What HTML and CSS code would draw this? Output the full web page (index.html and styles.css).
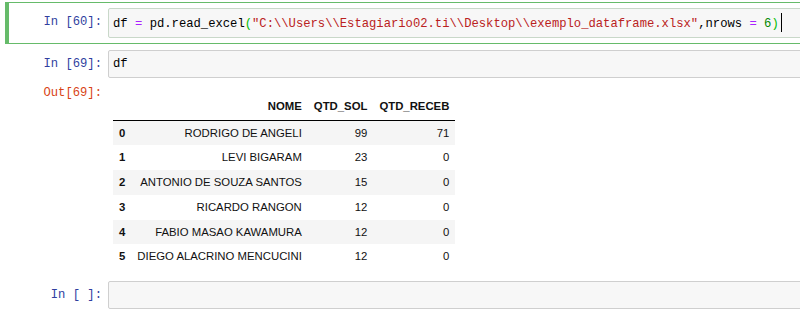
FILE: index.html
```html
<!DOCTYPE html>
<html lang="en">
<head>
    <meta charset="UTF-8">
    <title>Notebook</title>
    <link rel="stylesheet" href="styles.css">
</head>
<body>
    <div class="notebook">
        <!-- selected cell, edit mode -->
        <div class="cell selected">
            <div class="prompt in">In&nbsp;[60]:</div>
            <div class="input-area">
                <pre class="code"><span>df</span> <span class="op">=</span> <span>pd.read_excel</span><span class="match">(</span><span class="str">"C:\\Users\\Estagiario02.ti\\Desktop\\exemplo_dataframe.xlsx"</span>,<span>nrows</span> <span class="op">=</span> <span class="num">6</span><span class="match">)</span><span class="cursor"></span></pre>
            </div>
        </div>

        <div class="cell">
            <div class="cell-input">
                <div class="prompt in">In&nbsp;[69]:</div>
                <div class="input-area">
                    <pre class="code">df</pre>
                </div>
            </div>
            <div class="output">
                <div class="prompt out">Out[69]:</div>
                <div class="output-sub">
                    <table class="dataframe">
                        <thead>
                            <tr>
                                <th></th>
                                <th>NOME</th>
                                <th>QTD_SOL</th>
                                <th>QTD_RECEB</th>
                            </tr>
                        </thead>
                        <tbody>
                            <tr><th>0</th><td>RODRIGO DE ANGELI</td><td>99</td><td>71</td></tr>
                            <tr><th>1</th><td>LEVI BIGARAM</td><td>23</td><td>0</td></tr>
                            <tr><th>2</th><td>ANTONIO DE SOUZA SANTOS</td><td>15</td><td>0</td></tr>
                            <tr><th>3</th><td>RICARDO RANGON</td><td>12</td><td>0</td></tr>
                            <tr><th>4</th><td>FABIO MASAO KAWAMURA</td><td>12</td><td>0</td></tr>
                            <tr><th>5</th><td>DIEGO ALACRINO MENCUCINI</td><td>12</td><td>0</td></tr>
                        </tbody>
                    </table>
                </div>
            </div>
        </div>

        <div class="cell">
            <div class="prompt in">In&nbsp;[&nbsp;]:</div>
            <div class="input-area">
                <pre class="code"> </pre>
            </div>
        </div>
    </div>
</body>
</html>
```

FILE: styles.css
```css
html,
body {
    width: 800px;
    overflow: hidden;
}

body {
    margin: 0;
    background-color: #fff;
    font-family: 'Liberation Sans', Arial, sans-serif;
}

/* the notebook is wider than the window, cells run off the right edge */
.notebook {
    width: 795px;
    padding: 2px 0 0 5px;
    overflow: hidden;
}

.cell {
    display: flex;
    width: 810px;
    border: 1px solid transparent;
    border-left-width: 4px;
    padding: 5px;
}

.cell:has(.cell-input) {
    flex-direction: column;
}

.cell.selected {
    border-color: #66bb6a;
}

.cell-input,
.output {
    display: flex;
}

.prompt {
    flex: 0 0 94px;
    box-sizing: border-box;
    padding-right: 6px;
    text-align: right;
    font-family: 'Liberation Mono', monospace;
    font-size: 12.2px;
    line-height: 18px;
    white-space: nowrap;
}

.prompt.in {
    padding-top: 5px;
    color: #303f9f;
}

.prompt.out {
    padding-top: 6px;
    color: #d84315;
}

.input-area {
    flex: 1;
    background-color: #f7f7f7;
    border: 1px solid #cfcfcf;
    border-radius: 2px;
    padding: 4px;
}

.selected .input-area {
    border-color: #c9d8c9;
}

.code {
    margin: 0;
    font-family: 'Liberation Mono', monospace;
    font-size: 12.2px;
    line-height: 18px;
    color: #000;
    white-space: pre;
}

.op {
    color: #aa22ff;
}

.str {
    color: #ba2121;
}

.num {
    color: #008800;
}

.match {
    color: #00bb00;
}

.cursor {
    display: inline-block;
    width: 1px;
    height: 19px;
    margin-left: 2px;
    background-color: #000;
    vertical-align: -5px;
}

.output-sub {
    padding: 6px 0 0 5px;
}

.dataframe {
    border-collapse: collapse;
    margin-top: 12px;
    font-size: 11.35px;
    color: #111;
}

.dataframe th,
.dataframe td {
    padding: 6px;
    line-height: 12.7px;
    text-align: right;
    white-space: nowrap;
}

.dataframe th {
    font-weight: bold;
}

.dataframe thead th {
    padding: 4px 6px 7px;
    border-bottom: 1px solid #000;
}

.dataframe tbody th {
    text-align: left;
}

.dataframe tbody tr:nth-child(odd) {
    background-color: #f5f5f5;
}
```
